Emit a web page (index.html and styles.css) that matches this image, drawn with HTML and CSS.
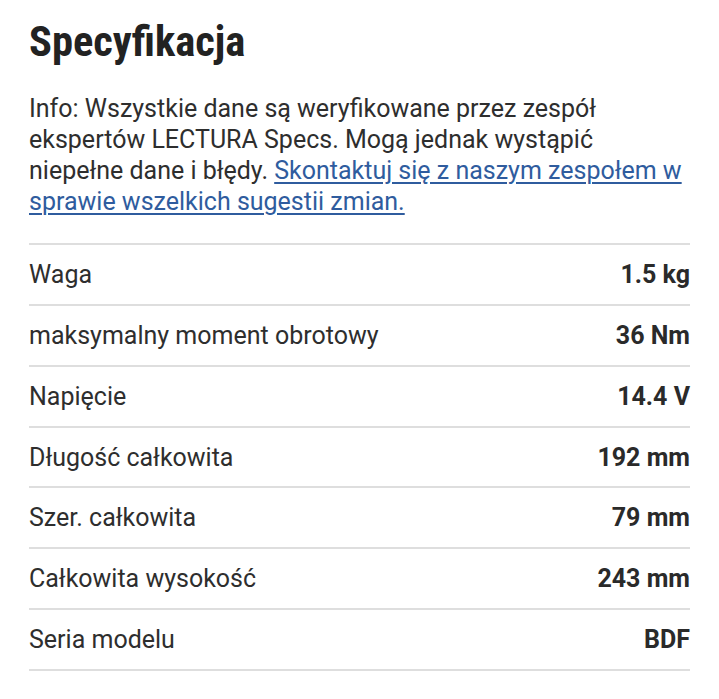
FILE: index.html
```html
<!DOCTYPE html>
<html lang="pl">
<head>
<meta charset="utf-8">
<title>Specyfikacja</title>
<link rel="stylesheet" href="styles.css">
</head>
<body>
<main class="spec">
  <h1 class="spec-title">Specyfikacja</h1>
  <p class="spec-info">Info: Wszystkie dane są weryfikowane przez zespół ekspertów LECTURA Specs. Mogą jednak wystąpić niepełne dane i błędy. <a class="spec-link" href="#">Skontaktuj się z naszym zespołem w sprawie wszelkich sugestii zmian.</a></p>
  <dl class="spec-table">
    <div class="spec-row"><dt class="spec-label">Waga</dt><dd class="spec-value">1.5 kg</dd></div>
    <div class="spec-row"><dt class="spec-label">maksymalny moment obrotowy</dt><dd class="spec-value">36 Nm</dd></div>
    <div class="spec-row"><dt class="spec-label">Napięcie</dt><dd class="spec-value">14.4 V</dd></div>
    <div class="spec-row"><dt class="spec-label">Długość całkowita</dt><dd class="spec-value">192 mm</dd></div>
    <div class="spec-row"><dt class="spec-label">Szer. całkowita</dt><dd class="spec-value">79 mm</dd></div>
    <div class="spec-row"><dt class="spec-label">Całkowita wysokość</dt><dd class="spec-value">243 mm</dd></div>
    <div class="spec-row"><dt class="spec-label">Seria modelu</dt><dd class="spec-value">BDF</dd></div>
  </dl>
</main>
</body>
</html>
```
FILE: styles.css
```css
html, body {
  margin: 0;
  padding: 0;
  background: #ffffff;
}

body {
  font-family: Roboto, "Liberation Sans", sans-serif;
  color: #2e2e2e;
}

.spec {
  padding: 18px 29px 0 29px;
}

.spec-title {
  margin: 0;
  font-family: "Roboto Condensed", Roboto, sans-serif;
  font-size: 42.5px;
  line-height: 48px;
  font-weight: 700;
  color: #222222;
}

.spec-info {
  margin: 27px 0 0 0;
  font-size: 25px;
  line-height: 31px;
}

.spec-link {
  color: #2f5c9e;
  text-decoration: underline;
  text-underline-offset: 3px;
  text-decoration-thickness: 2px;
}

.spec-table {
  margin: 26px 0 0 0;
  border-bottom: 2px solid #dedede;
}

.spec-row {
  display: flex;
  justify-content: space-between;
  align-items: center;
  height: 58.86px;
  border-top: 2px solid #dedede;
  font-size: 25px;
}

.spec-label {
  margin: 0;
  font-weight: 400;
}

.spec-value {
  margin: 0;
  font-weight: 700;
  color: #2a2a2a;
}
```
